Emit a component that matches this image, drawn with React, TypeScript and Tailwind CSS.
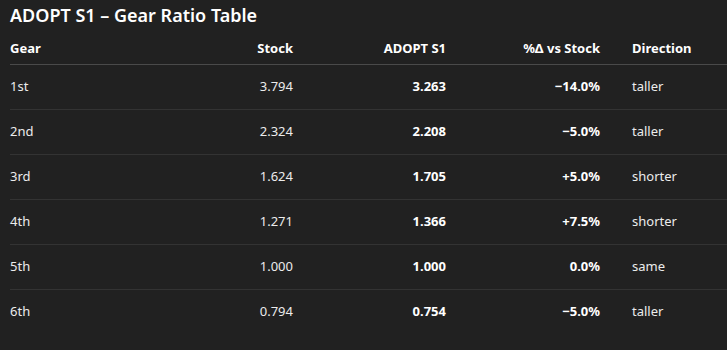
const rows = [
  { gear: '1st', stock: '3.794', adopt: '3.263', delta: '−14.0%', dir: 'taller' },
  { gear: '2nd', stock: '2.324', adopt: '2.208', delta: '−5.0%', dir: 'taller' },
  { gear: '3rd', stock: '1.624', adopt: '1.705', delta: '+5.0%', dir: 'shorter' },
  { gear: '4th', stock: '1.271', adopt: '1.366', delta: '+7.5%', dir: 'shorter' },
  { gear: '5th', stock: '1.000', adopt: '1.000', delta: '0.0%', dir: 'same' },
  { gear: '6th', stock: '0.794', adopt: '0.754', delta: '−5.0%', dir: 'taller' },
];

export default function App() {
  return (
    <div
      className="w-[727px] h-[350px] overflow-hidden bg-[#212121] text-[#ececec] pl-[10px]"
      style={{ fontFamily: '"Noto Sans", "Open Sans", sans-serif' }}
    >
      <h1 className="text-[18px] font-semibold text-white leading-[24px] pt-[3px]">
        ADOPT S1 – Gear Ratio Table
      </h1>
      <table className="mt-[12px] w-[760px] border-collapse text-[13px] table-fixed">
        <colgroup>
          <col className="w-[140px]" />
          <col className="w-[159px]" />
          <col className="w-[153px]" />
          <col className="w-[154px]" />
          <col className="w-[154px]" />
        </colgroup>
        <thead>
          <tr className="border-b border-[#4a4a4a] h-[25px] align-top">
            <th className="text-left font-bold text-white pr-4">Gear</th>
            <th className="text-right font-bold text-white px-4">Stock</th>
            <th className="text-right font-bold text-white px-4">ADOPT S1</th>
            <th className="text-right font-bold text-white px-4">%Δ vs Stock</th>
            <th className="text-left font-bold text-white px-4">Direction</th>
          </tr>
        </thead>
        <tbody>
          {rows.map((r, i) => (
            <tr
              key={r.gear}
              className={`h-[45px] ${i < rows.length - 1 ? 'border-b border-[#333333]' : ''}`}
            >
              <td className="text-left pr-4">{r.gear}</td>
              <td className="text-right px-4">{r.stock}</td>
              <td className="text-right px-4 font-bold text-white">{r.adopt}</td>
              <td className="text-right px-4 font-bold text-white">{r.delta}</td>
              <td className="text-left px-4">{r.dir}</td>
            </tr>
          ))}
        </tbody>
      </table>
    </div>
  );
}
